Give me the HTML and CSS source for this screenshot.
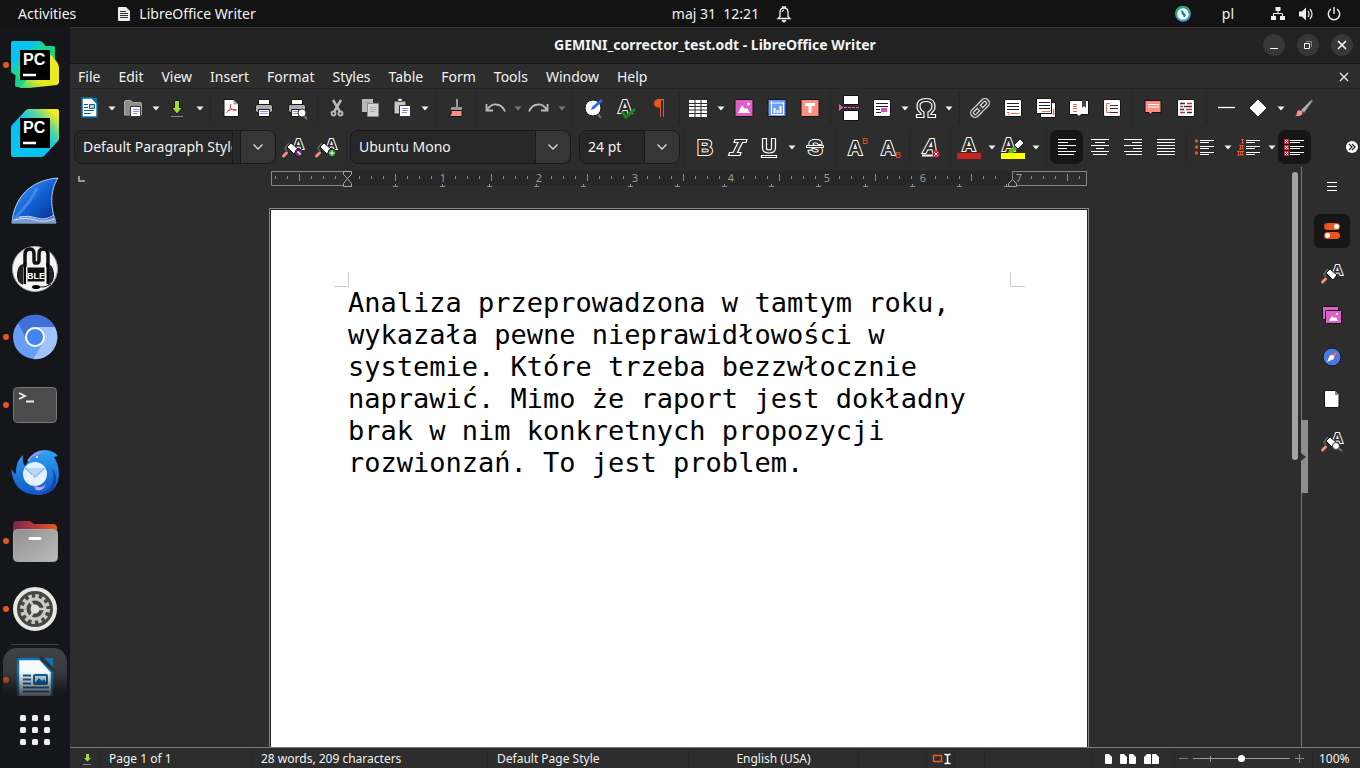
FILE: index.html
```html
<!DOCTYPE html>
<html lang="en">
<head>
<meta charset="utf-8">
<title>GEMINI_corrector_test.odt - LibreOffice Writer</title>
<link rel="stylesheet" href="styles.css">
</head>
<body>
<svg class="defs" aria-hidden="true">
  <defs>
    <linearGradient id="pc2" x1="0" y1="1" x2="1" y2="0"><stop offset=".5" stop-color="#07c3f2"/><stop offset=".72" stop-color="#5fd79a"/><stop offset=".9" stop-color="#f5ea20"/></linearGradient>
    <linearGradient id="pcg" x1="0" y1="0" x2="1" y2="1"><stop offset=".3" stop-color="#07c3f2"/><stop offset=".5" stop-color="#21d789"/></linearGradient>
    <linearGradient id="pcy" x1="0" y1="1" x2="1" y2="0"><stop offset="0" stop-color="#21d789"/><stop offset=".35" stop-color="#e6e820"/><stop offset="1" stop-color="#f5ea20"/></linearGradient>
    <linearGradient id="fin" x1="0" y1="0" x2="1" y2="1"><stop offset="0" stop-color="#4da3ff"/><stop offset=".5" stop-color="#1261d6"/><stop offset="1" stop-color="#06267c"/></linearGradient>
    <linearGradient id="fold" x1="0" y1="0" x2="1" y2="0"><stop offset="0" stop-color="#7a2554"/><stop offset="1" stop-color="#e95420"/></linearGradient>
    <linearGradient id="grey" x1="0" y1="0" x2="1" y2="1"><stop offset="0" stop-color="#8f8f8f"/><stop offset="1" stop-color="#bcbcbc"/></linearGradient>
    <linearGradient id="bird" x1="0" y1="0" x2="0" y2="1"><stop offset="0" stop-color="#2ea4f2"/><stop offset="1" stop-color="#1257c9"/></linearGradient>
    <symbol id="caret" viewBox="0 0 10 10"><path d="M1.500 3.500h7L5 7.500z" fill="currentColor"/></symbol>
    <symbol id="chevron" viewBox="0 0 12 12"><path d="M1.500 3.500 6 8l4.500-4.500" fill="none" stroke="#ddd" stroke-width="1.300"/></symbol>
    <symbol id="roller" viewBox="0 0 24 24">
      <text x="12" y="14" class="glyph" font-size="15">A</text>
      <path d="m2.500 21 3-3" stroke="#f98c7f" stroke-width="3" stroke-linecap="round"/>
      <path d="m6 17-2-4 4-5" stroke="#666" stroke-width="1.500" fill="none"/>
      <path d="m6 12 4-4 7 6-4 5z" fill="#fff" stroke="#181818"/>
    </symbol>
    <symbol id="sheet" viewBox="0 0 24 24"><rect x="3.500" y="3.500" width="17" height="17" rx="1.500" fill="#fff" stroke="#151515"/></symbol>
    <symbol id="printer" viewBox="0 0 24 24"><g stroke="#151515"><path d="M6.500 3.500h11v5h-11z" fill="#fff"/><rect x="3.500" y="8.500" width="17" height="8" rx="2" fill="#adadad"/><path d="M6.500 13.500h11v7h-11z" fill="#fff"/></g><path d="M8 15.500h8M8 17.500h8" stroke="#8b8bea"/></symbol>
  </defs>
</svg>

<header class="topbar">
  <div class="top-left">
    <button class="plain">Activities</button>
    <button class="plain app">
      <svg width="14" height="16" viewBox="0 0 14 16"><path d="M1 2q0-1 1-1h7l4 4v9q0 1-1 1H2q-1 0-1-1z" fill="#eee"/><path d="M3 5.500h6M3 7.500h8M3 9.500h8M3 11.500h8" stroke="#333"/></svg>
      LibreOffice Writer</button>
  </div>
  <button class="plain clock"><time>maj 31&nbsp; 12:21</time>
    <svg width="16" height="18" viewBox="0 0 16 18"><path d="M2 13.500h12l-2-2V7q0-4-4-4T4 7v4.500z" fill="none" stroke="#eee" stroke-width="1.300"/><path d="M6 7q0-2 2-2M6 15.500h4L8 17.500z" stroke="#eee" fill="#eee"/><path d="M6 2h4" stroke="#eee" stroke-width="1.500"/></svg>
  </button>
  <div class="top-right">
    <svg width="16" height="16" viewBox="0 0 16 16"><circle cx="8" cy="8" r="6.800" fill="#fff" stroke="#3aa0dc" stroke-width="2"/><path d="M1.300 9A6.800 6.800 0 1 1 14.700 7" fill="none" stroke="#1faa69" stroke-width="2"/><path d="m5 4 3 1 3 4-2 3-1-3-2-1 1-1z" fill="#1b8a94"/></svg>
    <span class="lang">pl</span>
    <button class="plain tray" aria-label="System menu">
      <svg width="16" height="16" viewBox="0 0 16 16"><path d="M5.500 1h5v4h-5zM1 10h5v4H1zM10 10h5v4h-5z" fill="#eee"/><path d="M8 5v3M3.500 10V7.500h9V10" stroke="#eee" fill="none"/></svg>
      <svg width="16" height="16" viewBox="0 0 16 16"><path d="M1 5.500h3l4-4v13l-4-4H1z" fill="#eee"/><path d="M10 5q2 3 0 6M12 3q4 5 0 10" fill="none" stroke="#ddd" stroke-width="1.300"/></svg>
      <svg width="16" height="16" viewBox="0 0 16 16"><path d="M5 3.200a5.700 5.700 0 1 0 6 0M8 1v7" fill="none" stroke="#eee" stroke-width="1.400"/></svg>
    </button>
  </div>
</header>

<div class="desktop">
  <nav class="dock" aria-label="Dock">
    <button class="dock-item running" aria-label="PyCharm">
      <svg viewBox="0 0 48 48"><path d="M6 5h36q2 0 2 2v20L18 46H6q-2 0-2-2z" fill="#16d583"/><path d="M40 14l6 7q2 3 2 6v14q0 2-2 3L18 47 8 47z" fill="url(#pcy)"/><path d="M0 2q0-2 2-2h27q2 0 4 3l6 9-14 20-16 5-8-5q-1 0-1-2z" fill="url(#pcg)"/><path d="M9 9h30v30H9z"/><text x="12" y="24" class="pc">PC</text><path d="M12 34h13" stroke="#fff" stroke-width="2.500"/></svg>
    </button>
    <button class="dock-item" aria-label="PyCharm Community">
      <svg viewBox="0 0 48 48"><path d="M0 19q0-2 1-3L15 1q1-1 3-1h28q2 0 2 2v27q0 2-1 3L33 47q-1 1-3 1H2q-2 0-2-2z" fill="url(#pc2)"/><path d="M9 9h30v30H9z"/><text x="12" y="24" class="pc">PC</text><path d="M12 34h13" stroke="#fff" stroke-width="2.500"/></svg>
    </button>
    <button class="dock-item" aria-label="Wireshark">
      <svg viewBox="0 0 48 48"><path d="M1 46C3 20 20 3 47 1 38 15 40 32 45 46z" fill="url(#fin)" stroke="#b5cff0"/><path d="M4 41q16-16 22-30" stroke="#8cc4ff" stroke-opacity=".35" stroke-width="3" fill="none"/><path d="M2 42q11-5 21-1t21-2l1 7H1z" fill="#7799d8"/><path d="M3 43q12-3 21 0t20-1M8 40q10-2 18 1t17-3" stroke="#cbdcf8" fill="none"/></svg>
    </button>
    <button class="dock-item" aria-label="Mumble">
      <svg viewBox="0 0 48 48"><circle cx="24" cy="24" r="22.500" fill="#f4f4f4" stroke="#aaa"/><path d="M14 22V10q0-6 5-6 4 0 4 5v6q0 3 1 3h2q2 0 2-3V9q0-5 4-5 5 0 5 6v12" fill="none" stroke="#111" stroke-width="3.500"/><path d="M12 19v21Q5 37 6 28q1-8 6-9zM37 19v21q7-3 6-12-1-8-6-9z" fill="#222"/><path d="M12.500 18h2.500v21h-2.500zM35.500 18H38v21h-2.500z"/><path d="M16.500 22.500h17v14h-17z" fill="#111"/><text x="16" y="34" class="ble">BLE</text><path d="M40 39q-6 4-12 3" stroke="#111" fill="none"/><ellipse cx="25" cy="42" rx="4" ry="2"/></svg>
    </button>
    <button class="dock-item running" aria-label="Chromium">
      <svg viewBox="0 0 48 48"><circle cx="24" cy="24" r="22" fill="#669df6"/><path d="M24 14h20A22 22 0 0 1 22 46l11-18z" fill="#a1c2fa"/><path d="M7 10a22 22 0 0 1 37 4H24q-8 0-10 9z" fill="#3f6fd8"/><circle cx="24" cy="24" r="9" fill="#4285f4" stroke="#fff" stroke-width="2"/></svg>
    </button>
    <button class="dock-item running" aria-label="Terminal">
      <svg viewBox="0 0 48 48"><rect x="2.500" y="6.500" width="43" height="35" rx="4" fill="#4b4b4b" stroke="#777"/><path d="m8 12 6 3-6 3M15 20.500h8" fill="none" stroke="#eee" stroke-width="1.800"/></svg>
    </button>
    <button class="dock-item" aria-label="Thunderbird">
      <svg viewBox="0 0 48 48"><path d="M0 19q2 5 5 6Q4 13 12 6q-1 8 2 11l4-6Q23 0 35 1q8 1 12 6l-4 1q5 8 5 18-2 20-22 20Q2 45 0 19z" fill="url(#bird)"/><path d="M16 12Q22 1 34 2l-7 4q-7 1-8 6z" fill="#9d8cf0"/><path d="M27 46q20-7 14-27 9 13-1 23-6 4-13 4z" fill="#1247b0"/><circle cx="24" cy="25" r="12" fill="#e3f1ff"/><path d="m14 19 10 9 10-9" fill="#b9d9f8" stroke="#8dbdf0" stroke-width="1.500"/><path d="m14 31 8-5M34 31l-7-5" stroke="#fff"/><path d="M23 37q8 3 12-2-3 8-10 6z" fill="#bba7f5"/><circle cx="26" cy="8" r="1" fill="#fff"/></svg>
    </button>
    <button class="dock-item running" aria-label="Files">
      <svg viewBox="0 0 48 48"><path d="M2 8q0-4 4-4h13l4 3h19q4 0 4 4v12H2z" fill="url(#fold)"/><rect x="2.500" y="12.500" width="44" height="32" rx="4" fill="url(#grey)" stroke="#aaa"/><path d="M19 21.500h10" stroke="#fff" stroke-width="3" stroke-linecap="round"/></svg>
    </button>
    <button class="dock-item running" aria-label="Settings">
      <svg viewBox="0 0 48 48"><circle cx="24" cy="24" r="20" fill="#454545" stroke="#e6e6e2" stroke-width="4"/><circle cx="24" cy="24" r="13" fill="none" stroke="#c9c9c5" stroke-width="4" stroke-dasharray="3.400 3.400"/><circle cx="24" cy="24" r="10" fill="none" stroke="#c9c9c5" stroke-width="3"/><path d="M24 24h11M24 24l-6-10M24 24l-6 10" stroke="#c9c9c5" stroke-width="2.500"/><circle cx="24" cy="24" r="4.500" fill="#e2e2de"/></svg>
    </button>
    <hr>
    <button class="dock-item running active" aria-label="LibreOffice Writer">
      <svg viewBox="0 0 48 48"><path d="M9 11h20l12 13v34H7V13q0-2 2-2z" fill="#f6fafc" stroke="#0f73b2" stroke-width="2.500"/><path d="M33 10h9v9z" fill="#0f73b2"/><path d="M29 9l14 14" stroke="#2e3033" stroke-width="3"/><path d="M12 27.500h8M12 31.500h8M12 35.500h8M12 39.500h26M12 43.500h26" stroke="#0f6098" stroke-width="2"/><rect x="23" y="27" width="13" height="9" rx="1" fill="#c7e4f5" stroke="#0f6098" stroke-width="2"/><path d="m23 36 5-6 3 3 2-2 3 5z" fill="#0f6098"/></svg>
    </button>
    <button class="launcher" aria-label="Show Applications">
      <svg width="32" height="32" viewBox="0 0 32 32" fill="#eeeeec"><g id="dots"><rect x="1" y="1" width="6" height="6" rx="1.500"/><rect x="13" y="1" width="6" height="6" rx="1.500"/><rect x="25" y="1" width="6" height="6" rx="1.500"/></g><use href="#dots" y="12"/><use href="#dots" y="24"/></svg>
    </button>
  </nav>

  <main class="window">
    <div class="titlebar">
      <h1>GEMINI_corrector_test.odt - LibreOffice Writer</h1>
      <div class="controls">
        <button aria-label="Minimize"><svg viewBox="0 0 12 12"><path d="M2 9.500h8" stroke="#fff"/></svg></button>
        <button aria-label="Restore"><svg viewBox="0 0 12 12"><path d="M2.500 4.500h5v5h-5z" fill="none" stroke="#fff"/><path d="M4 2.500h5.500V8" fill="none" stroke="#888"/></svg></button>
        <button aria-label="Close"><svg viewBox="0 0 12 12"><path d="m2 2 8 8M10 2l-8 8" stroke="#fff" stroke-width="1.500"/></svg></button>
      </div>
    </div>

    <nav class="menubar" aria-label="Menu">
      <button>File</button><button>Edit</button><button>View</button><button>Insert</button><button>Format</button><button>Styles</button><button>Table</button><button>Form</button><button>Tools</button><button>Window</button><button>Help</button>
      <button class="close-doc" aria-label="Close document"><svg width="12" height="12" viewBox="0 0 12 12"><path d="m2 2 8 8M10 2l-8 8" stroke="#eee" stroke-width="1.300"/></svg></button>
    </nav>

    <div class="toolbar" role="toolbar" aria-label="Standard">
      <button class="drop" aria-label="New"><svg viewBox="0 0 24 24"><path d="M5 2h10l5 5v14H5z" fill="#fff" stroke="#0b6fae" stroke-width="1.500"/><path d="M14 2h6v6z" fill="#0b6fae"/><path d="M7 8.500h4M7 11.500h4M7 14.500h10M7 17.500h7" stroke="#0b5a90"/><path d="M12.500 8.500h5v4h-5z" fill="#a5d3ec" stroke="#0b5a90"/></svg><svg class="caret"><use href="#caret"/></svg></button>
      <button class="drop" aria-label="Open"><svg viewBox="0 0 24 24"><path d="M3.500 6q0-1.500 1.500-1.500h5l2 2h7q1.500 0 1.500 1.500v11h-17z" fill="#8e8e8e" stroke="#a8a8a8"/><path d="M9.500 10.500h10v10h-10z" fill="#fff" stroke="#333"/><path d="M12 13.500h6M12 15.500h6M12 17.500h4" stroke="#8b8bea"/></svg><svg class="caret"><use href="#caret"/></svg></button>
      <button class="drop" aria-label="Save"><svg viewBox="0 0 24 24"><path d="M9.500 4.500h5v7h3L12 18 6.500 11.500h3z" fill="#9fdc3c" stroke="#151515"/><path d="M6 20.500h12" stroke="#888"/></svg><svg class="caret"><use href="#caret"/></svg></button>
      <span class="sep"></span>
      <button aria-label="Export as PDF"><svg viewBox="0 0 24 24"><path d="M5 3.500h9.500l5 5v12H5z" fill="#fff" stroke="#151515"/><path d="M14.500 3.500v5h5" fill="#aaa"/><path d="M11.500 8v4l-4 5m4-5q3 4 6 2-4-2-9 1" fill="none" stroke="#e2475c"/></svg></button>
      <button aria-label="Print"><svg viewBox="0 0 24 24"><use href="#printer"/></svg></button>
      <button aria-label="Print preview"><svg viewBox="0 0 24 24"><use href="#printer"/><path d="m17 18 5 5" stroke="#777" stroke-width="2"/><circle cx="17" cy="17" r="4" fill="#fff" stroke="#333"/></svg></button>
      <span class="sep"></span>
      <button aria-label="Cut"><svg viewBox="0 0 24 24"><path d="m7 4 7 12M15 4 8 16" stroke="#b9b9b9" stroke-width="2.500"/><circle cx="7.500" cy="17.500" r="2" fill="none" stroke="#b9b9b9" stroke-width="1.800"/><circle cx="14.500" cy="17.500" r="2" fill="none" stroke="#b9b9b9" stroke-width="1.800"/></svg></button>
      <button aria-label="Copy"><svg viewBox="0 0 24 24"><path d="M3 3h11v13H3z" fill="#b9b9b9"/><path d="M8.500 7.500h11v13h-11z" fill="#d4d4d4" stroke="#888"/><path d="M11 11.500h6M11 13.500h6M11 15.500h5M5 6.500h6" stroke="#aaa"/></svg></button>
      <button class="drop" aria-label="Paste"><svg viewBox="0 0 24 24"><path d="M4 5h12v13H4z" fill="#c8c8c8" stroke="#222"/><path d="M8 2.500h4v3H8z" fill="#fff" stroke="#444"/><path d="M9.500 9.500h11v11h-11z" fill="#fff" stroke="#333"/><path d="M12 12.500h6M12 14.500h6M12 16.500h5" stroke="#8b8bea"/></svg><svg class="caret"><use href="#caret"/></svg></button>
      <span class="sep"></span>
      <button aria-label="Clone formatting"><svg viewBox="0 0 24 24"><path d="M13 3v9" stroke="#999" stroke-width="2"/><path d="M7 12q0-1 1-1h10v3H7z" fill="#999"/><path d="M7 14.500h11v6H5q3-2 2-6z" fill="#fa8f82" stroke="#181818"/></svg></button>
      <span class="sep"></span>
      <button class="drop muted" aria-label="Undo"><svg viewBox="0 0 24 24"><path d="M3.500 8v6.500H10M4 14Q8 8 13 8.500q6 0 9 7" fill="none" stroke="#bbb" stroke-width="1.800"/></svg><svg class="caret"><use href="#caret"/></svg></button>
      <button class="drop muted" aria-label="Redo"><svg viewBox="0 0 24 24"><path d="M20.500 8v6.500H14M20 14q-4-6-9-5.500-6 0-9 7" fill="none" stroke="#bbb" stroke-width="1.800"/></svg><svg class="caret"><use href="#caret"/></svg></button>
      <span class="sep"></span>
      <button aria-label="Find and replace"><svg viewBox="0 0 24 24"><path d="m16 17 4 5" stroke="#777" stroke-width="2"/><circle cx="12" cy="12" r="8" fill="#fff" stroke="#181818"/><path d="m10 14 1-3 9-8 2 2-9 8z" fill="#2f6ae0"/></svg></button>
      <button aria-label="Spelling"><svg viewBox="0 0 24 24"><text x="4" y="17" class="glyph" font-size="19">A</text><path d="m8 16 4 5 9-8" fill="none" stroke="#128a22" stroke-width="3"/></svg></button>
      <button aria-label="Formatting marks"><svg viewBox="0 0 24 24"><path d="M11 3h6v18h-1V4.500h-2V21h-1v-9.500h-2Q7 11 7 7.500T11 3z" fill="#e95420"/></svg></button>
      <span class="sep"></span>
      <button class="drop" aria-label="Insert table"><svg viewBox="0 0 24 24"><path d="M3 4h18v17H3z" fill="#fff"/><path d="M3 7.500h18M3 10.500h18M3 14h18M3 17.500h18M9 4v17M15 4v17" stroke="#2d2d2d"/></svg><svg class="caret"><use href="#caret"/></svg></button>
      <button aria-label="Insert image"><svg viewBox="0 0 24 24"><rect x="3" y="3.500" width="18" height="17" rx="1" fill="#e05fc9" stroke="#151515"/><path d="m6 17 4-8 3 4 2-1 3 5z" fill="#fff"/><circle cx="16.500" cy="8" r="1.500" fill="#fff"/></svg></button>
      <button aria-label="Insert chart"><svg viewBox="0 0 24 24"><rect x="3" y="3.500" width="18" height="17" rx="1" fill="#6f9cf8" stroke="#151515"/><path d="M6.500 5v13.500H19M5 7h14M18.500 7v11.500" fill="none" stroke="#fff"/><path d="M9.500 17v-5M12.500 17v-3M15.500 17v-7" stroke="#fff" stroke-width="2"/></svg></button>
      <button aria-label="Insert text box"><svg viewBox="0 0 24 24"><rect x="3" y="3.500" width="18" height="17" rx="1" fill="#fa8f82" stroke="#151515"/><path d="M7 8.500h10M12 8v9" stroke="#fff" stroke-width="3"/></svg></button>
      <span class="sep"></span>
      <button aria-label="Page break"><svg viewBox="0 0 24 24"><path d="M4.500-.5h15v9h-15zM4.500 14.500h15v10h-15z" fill="#fff" stroke="#111"/><path d="M0 8v7l4-3.500z" fill="#e05fc9"/><path d="M5 11.500h15" stroke="#e05fc9" stroke-dasharray="3 1"/></svg></button>
      <button class="drop" aria-label="Insert field"><svg viewBox="0 0 24 24"><use href="#sheet"/><path d="M6 7.500h12M6 10.500h12M6 13.500h4M6 16.500h5" stroke="#222"/><path d="M11 12h6v4h-6z" fill="#d44fc0"/></svg><svg class="caret"><use href="#caret"/></svg></button>
      <button class="drop" aria-label="Special character"><svg viewBox="0 0 24 24"><path d="M2.500 18.500H7v-1Q3 14.500 3 10.500 3 2.500 12 2.500t9 8q0 4-4 7v1h4.500v3H14V16q4-2 4-6 0-4.500-6-4.500T6 10q0 4 4 6v5.500H2.500z" fill="#2d2d2d" stroke="#fff" stroke-width="1.200"/></svg><svg class="caret"><use href="#caret"/></svg></button>
      <span class="sep"></span>
      <button aria-label="Hyperlink"><svg viewBox="0 0 24 24"><g fill="none" transform="rotate(-45 12 12)"><g stroke="#ddd" stroke-width="4"><rect x="2" y="9" width="11" height="6" rx="3"/><rect x="11" y="9" width="11" height="6" rx="3"/></g><g stroke="#333" stroke-width="1.500"><rect x="2" y="9" width="11" height="6" rx="3"/><rect x="11" y="9" width="11" height="6" rx="3"/></g></g></svg></button>
      <button aria-label="Footnote"><svg viewBox="0 0 24 24"><use href="#sheet"/><path d="M6 7.500h12M6 10.500h12M6 13.500h12" stroke="#222"/><path d="M6 16.500h2v3M10 17.500h8" fill="none" stroke="#f07060"/></svg></button>
      <button aria-label="Endnote"><svg viewBox="0 0 24 24"><path d="M6.500 6.500h15v15h-15z" fill="#fff" stroke="#151515"/><path d="M19.500 13v6" stroke="#f07060" stroke-width="1.500"/><path d="M2.500 2.500h15v15h-15z" fill="#fff" stroke="#151515"/><path d="M5 6.500h11M5 9.500h11M5 12.500h11" stroke="#222"/><path d="M8 15.500h8" stroke="#f07060"/></svg></button>
      <button aria-label="Bookmark"><svg viewBox="0 0 24 24"><path d="M2.500 4.500h19v14H14l-2 2-2-2H2.500z" fill="#fff" stroke="#151515"/><path d="M15 4h4v8l-2-2-2 2z" fill="#444"/><path d="M6 8.500h4M6 10.500h4M6 12.500h4M6 15.500h4" stroke="#f07060"/></svg></button>
      <button aria-label="Cross-reference"><svg viewBox="0 0 24 24"><use href="#sheet"/><path d="M10 7.500H6.500v9H10" fill="none" stroke="#f07060"/><path d="M10 9.500h8M10 12.500h8M10 16.500h8" stroke="#333"/></svg></button>
      <span class="sep"></span>
      <button aria-label="Comment"><svg viewBox="0 0 24 24"><path d="M4 4.500h16v12H11l-2 3-1-3H4z" fill="#fa8f82" stroke="#151515"/><path d="M7 8.500h11M7 11h11" stroke="#fff"/></svg></button>
      <button aria-label="Track changes"><svg viewBox="0 0 24 24"><use href="#sheet"/><path d="M6 7.500h5M10 10.500h8M6 13.500h4M13 16.500h5" stroke="#333" stroke-width="1.300"/><path d="M13 7.500h5M6 10.500h3M12 13.500h6M6 16.500h5" stroke="#cc2940" stroke-width="1.300"/></svg></button>
      <span class="sep"></span>
      <button aria-label="Line"><svg viewBox="0 0 24 24"><path d="M3 11.500h17" stroke="#fff" stroke-width="1.300"/></svg></button>
      <button class="drop" aria-label="Basic shapes"><svg viewBox="0 0 24 24"><path d="m12 4 8 8-8 8-8-8z" fill="#fff" stroke="#fff"/></svg><svg class="caret"><use href="#caret"/></svg></button>
      <button aria-label="Draw functions"><svg viewBox="0 0 24 24"><path d="M9 14 19 4q2-1 1 2l-8 11z" fill="#aaa" stroke="#555"/><path d="M3 20q2-1 2-4t5-1q2 4-3 5z" fill="#fa8f82"/></svg></button>
    </div>

    <div class="toolbar format" role="toolbar" aria-label="Formatting">
      <div class="combo style"><input aria-label="Paragraph style" value="Default Paragraph Style"><span class="edge"></span><button aria-label="Show styles"><svg width="12" height="12"><use href="#chevron"/></svg></button></div>
      <button aria-label="Update style"><svg viewBox="0 0 24 24"><use href="#roller"/><circle cx="18" cy="18" r="4" fill="#76237c" stroke="#222"/><path d="m16.500 16.500 3 3" stroke="#fff" stroke-width="1.500"/></svg></button>
      <button aria-label="New style"><svg viewBox="0 0 24 24"><use href="#roller"/><circle cx="18" cy="18" r="4" fill="#2b962b" stroke="#222"/><path d="M15.500 18h5M18 15.500v5" stroke="#fff"/></svg></button>
      <span class="sep"></span>
      <div class="combo font"><input aria-label="Font name" value="Ubuntu Mono"><button aria-label="Show fonts"><svg width="12" height="12"><use href="#chevron"/></svg></button></div>
      <div class="combo size"><input aria-label="Font size" value="24 pt"><button aria-label="Show sizes"><svg width="12" height="12"><use href="#chevron"/></svg></button></div>
      <span class="sep"></span>
      <button aria-label="Bold"><svg viewBox="0 0 24 24"><text x="4" y="20" class="glyph" font-size="22">B</text></svg></button>
      <button aria-label="Italic"><svg viewBox="0 0 24 24"><path d="M9 4.500h12l-1 3h-3.500l-5 10H15l-1 3H2.500l1-3H7l5-10H8z" fill="#333" stroke="#fff" stroke-width="1.200"/></svg></button>
      <button class="drop" aria-label="Underline"><svg viewBox="0 0 24 24"><path d="M5.500 3.500h4V13q0 2 2.500 2t2.500-2V3.500h4V13q0 5-6.500 5t-6.500-5zM4.500 20.500h15v2h-15z" fill="#333" stroke="#fff" stroke-width="1.200"/></svg><svg class="caret"><use href="#caret"/></svg></button>
      <button aria-label="Strikethrough"><svg viewBox="0 0 24 24"><text x="5" y="20" class="glyph" font-size="22">S</text><path d="M3.500 10.500h17v2h-17z" fill="#333" stroke="#fff"/></svg></button>
      <span class="sep"></span>
      <button aria-label="Superscript"><svg viewBox="0 0 24 24"><text x="4" y="20" class="glyph" font-size="20">A</text><text x="18" y="9" class="script">B</text></svg></button>
      <button aria-label="Subscript"><svg viewBox="0 0 24 24"><text x="4" y="20" class="glyph" font-size="20">A</text><text x="18" y="23" class="script">B</text></svg></button>
      <span class="sep"></span>
      <button aria-label="Clear formatting"><svg viewBox="0 0 24 24"><text x="5" y="18" class="glyph slant" font-size="20">A</text><path d="M4 20.500h12" stroke="#fff" stroke-width="2"/><circle cx="18" cy="19" r="3.500" fill="#cf2942"/><path d="m16.500 17.500 3 3m0-3-3 3" stroke="#fff"/></svg></button>
      <span class="sep"></span>
      <button class="drop" aria-label="Font color"><svg viewBox="0 0 24 24"><text x="5" y="16" class="glyph" font-size="19">A</text><path d="M0 18h24v6H0z" fill="#c9211e"/></svg><svg class="caret"><use href="#caret"/></svg></button>
      <button class="drop" aria-label="Highlighting color"><svg viewBox="0 0 24 24"><text x="1" y="16" class="glyph" font-size="18">A</text><path d="m13 10 6-6 4 4-6 6z" fill="#fff" stroke="#222"/><path d="m7 18 1-3 5-4 3 3-4 4z" fill="#62b52d"/><path d="M0 18h24v6H0z" fill="#ff0"/></svg><svg class="caret"><use href="#caret"/></svg></button>
      <span class="sep"></span>
      <button class="pressed" aria-label="Align left"><svg viewBox="0 0 24 24"><path d="M3 4.500h18M3 7.500h10M3 10.500h18M3 13.500h9M3 16.500h18M3 19.500h16" stroke="#fff"/></svg></button>
      <button aria-label="Center"><svg viewBox="0 0 24 24"><path d="M3 4.500h18M7 7.500h10M3 10.500h18M8 13.500h8M3 16.500h18M5 19.500h14" stroke="#fff"/></svg></button>
      <button aria-label="Align right"><svg viewBox="0 0 24 24"><path d="M3 4.500h18M11 7.500h10M3 10.500h18M12 13.500h9M3 16.500h18M5 19.500h16" stroke="#fff"/></svg></button>
      <button aria-label="Justify"><svg viewBox="0 0 24 24"><path d="M3 4.500h18M3 7.500h18M3 10.500h18M3 13.500h18M3 16.500h18M3 19.500h18" stroke="#fff"/></svg></button>
      <span class="sep"></span>
      <button class="drop" aria-label="Bullets"><svg viewBox="0 0 24 24"><path d="M7 5.500h14M7 7.500h9M7 11.500h14M7 13.500h9M7 17.500h14M7 19.500h9" stroke="#fff"/><g fill="#e95420"><circle cx="3.500" cy="6" r="1.700"/><circle cx="3.500" cy="12" r="1.700"/><circle cx="3.500" cy="18" r="1.700"/></g></svg><svg class="caret"><use href="#caret"/></svg></button>
      <button class="drop" aria-label="Numbering"><svg viewBox="0 0 24 24"><path d="M9 5.500h14M9 7.500h9M9 11.500h14M9 13.500h9M9 17.500h14M9 19.500h9" stroke="#fff"/><path d="M4 4.500h3M5.500 4v4M4 8h3M2 10.500h5M3.500 10v4M5.500 10v4M2 14h5M0 16.500h7M1.500 16v4M3.500 16v4M5.500 16v4M0 20h7" stroke="#e95420"/></svg><svg class="caret"><use href="#caret"/></svg></button>
      <button class="pressed" aria-label="No list"><svg viewBox="0 0 24 24"><path d="M7 5.500h14M7 7.500h10M7 11.500h14M7 13.500h10M7 17.500h14M7 19.500h10" stroke="#fff"/><path d="M1 4h5v5H1zM1 10h5v5H1zM1 16h5v5H1z" fill="#cc2942"/><path d="m2 5 3 3m0-3L2 8m0 3 3 3m0-3-3 3m0 3 3 3m0-3-3 3" stroke="#fff"/></svg></button>
      <button class="overflow" aria-label="More controls"><svg width="12" height="12" viewBox="0 0 12 12"><circle cx="6" cy="6" r="6" fill="#fff"/><path d="m3 3 3 3-3 3m3-6 3 3-3 3" fill="none" stroke="#222" stroke-width="1.200"/></svg></button>
    </div>

    <div class="workspace">
      <section class="canvas">
        <div class="ruler-row">
          <svg class="tab-type" width="7" height="6" viewBox="0 0 7 6"><path d="M1 0v5h6" fill="none" stroke="#999" stroke-width="2"/></svg>
          <svg class="ruler" height="20" viewBox="0 0 816 20" aria-label="Ruler">
            <defs>
              <pattern id="ticks" x="4" width="48" height="20" patternUnits="userSpaceOnUse"><path d="M.5 5v3M12.500 5v3M36.500 5v3" stroke="#8a8a8a"/><path d="M24.500 3v7" stroke="#8a8a8a"/></pattern>
              <pattern id="stops" x="-1" width="47" height="20" patternUnits="userSpaceOnUse"><path d="M29 15.500h5M31.500 13v3" stroke="#8a8a8a"/></pattern>
            </defs>
            <path d="M77 0h664v14H77z" fill="#272727"/>
            <path d="M.5.500h76v14H.5zM741.500.500h74v14h-74z" fill="none" stroke="#888"/>
            <rect x="2" width="70" height="14" fill="url(#ticks)"/><rect x="82" width="654" height="14" fill="url(#ticks)"/><rect x="752" width="61" height="14" fill="url(#ticks)"/>
            <rect x="112" y="12" width="625" height="5" fill="url(#stops)"/>
            <g fill="#272727"><path d="M168 2h9v10h-9zM264 2h9v10h-9zM360 2h9v10h-9zM456 2h9v10h-9zM552 2h9v10h-9zM648 2h9v10h-9z"/></g>
            <g class="numbers"><text x="172" y="11">1</text><text x="268" y="11">2</text><text x="364" y="11">3</text><text x="460" y="11">4</text><text x="556" y="11">5</text><text x="652" y="11">6</text><text x="748" y="11">7</text></g>
            <path d="M72.500.5h8v3l-4 4-4-4zM76.500 7.500l4 5v3h-8v-3zM741.500 8.500l4 4v3h-8v-3z" fill="#2d2d2d" stroke="#aaa"/>
          </svg>
        </div>
        <article class="page">
          <p>Analiza przeprowadzona w tamtym roku, wykazała pewne nieprawidłowości w systemie. Które trzeba bezzwłocznie naprawić. Mimo że raport jest dokładny brak w nim konkretnych propozycji rozwionzań. To jest problem.</p>
        </article>
      </section>
      <div class="scroll"><div class="thumb"></div></div>
      <aside class="sidebar" aria-label="Sidebar">
        <button class="handle" aria-label="Hide sidebar"><svg width="5" height="8" viewBox="0 0 5 8"><path d="m0 0 5 4-5 4z" fill="#333"/></svg></button>
        <button aria-label="Sidebar settings"><svg viewBox="0 0 24 24"><path d="M7 8.500h10M7 12.500h10M7 16.500h10" stroke="#fff"/></svg></button>
        <button class="pressed" aria-label="Properties"><svg viewBox="0 0 24 24"><rect x="4" y="4" width="16" height="7" rx="3.500" fill="#e95420"/><rect x="4" y="13" width="16" height="7" rx="3.500" fill="#e95420"/><circle cx="16.500" cy="7.500" r="2.500" fill="#fff"/><circle cx="7.500" cy="16.500" r="2.500" fill="#fff"/></svg></button>
        <button aria-label="Styles"><svg viewBox="0 0 24 24"><use href="#roller"/></svg></button>
        <button aria-label="Gallery"><svg viewBox="0 0 24 24"><rect x="2.500" y="3.500" width="16" height="13" rx="1" fill="#df5fc9" stroke="#151515"/><rect x="5.500" y="7.500" width="16" height="13" rx="1" fill="#df5fc9" stroke="#151515"/><path d="m9 18 3-5 2 2 2-1 2 4z" fill="#fff"/><circle cx="17" cy="11" r="1" fill="#fff"/></svg></button>
        <button aria-label="Navigator"><svg viewBox="0 0 24 24"><circle cx="12" cy="12" r="9" fill="#4a78e0" stroke="#151515"/><path d="m7 17 3-7 4 4z" fill="#fff"/><path d="m10 10 7-3-3 7z" fill="#e7707d"/><circle cx="12" cy="12" r="2" fill="#fff"/></svg></button>
        <button aria-label="Page"><svg viewBox="0 0 24 24"><path d="M4.500 5q0-1.500 1.500-1.500h9l4 4V19q0 1.500-1.500 1.500H6q-1.500 0-1.500-1.500z" fill="#fff" stroke="#151515"/><path d="M15 4v4h4z" fill="#888"/></svg></button>
        <button aria-label="Style inspector"><svg viewBox="0 0 24 24"><use href="#roller"/><path d="m18 19 4 3" stroke="#777" stroke-width="2"/><circle cx="16" cy="17" r="3.500" fill="#fff" stroke="#333"/></svg></button>
      </aside>
    </div>

    <footer class="statusbar">
      <span class="st save"><svg width="10" height="12" viewBox="0 0 10 12"><path d="M4 1h3v4h2L5.500 8.500 2 5h2z" fill="#9fdc3c"/><path d="M1 11.500h8" stroke="#888"/></svg></span>
      <span class="st pages">Page 1 of 1</span>
      <span class="st words">28 words, 209 characters</span>
      <span class="st pstyle">Default Page Style</span>
      <span class="st language">English (USA)</span>
      <span class="st spacer"></span>
      <span class="st mode"><svg width="20" height="12" viewBox="0 0 20 12"><path d="M1.500 2.500h8v6h-8z" fill="none" stroke="#f05a22" stroke-width="1.500"/><path d="M12.500 1.500h2l1 1 1-1h2M15.500 2v8M12.500 10.500h2l1-1 1 1h2" fill="none" stroke="#fff" stroke-width="1.500"/></svg></span>
      <span class="st blank"></span>
      <span class="st object"></span>
      <span class="st views">
        <button aria-label="Single page"><svg width="9" height="12" viewBox="0 0 9 12"><path d="M1 2q0-1 1-1h3l3 3v6q0 1-1 1H2q-1 0-1-1z" fill="#fff"/></svg></button>
        <button aria-label="Multiple pages"><svg width="18" height="12" viewBox="0 0 18 12"><path d="M1 2q0-1 1-1h3l3 3v6q0 1-1 1H2q-1 0-1-1zM10 2q0-1 1-1h3l3 3v6q0 1-1 1h-5q-1 0-1-1z" fill="#fff"/></svg></button>
        <button aria-label="Book view"><svg width="17" height="12" viewBox="0 0 17 12"><path d="M1 4l3-3h3q1 0 1 1v9H2q-1 0-1-1zM9 2q0-1 1-1h3l3 3v6q0 1-1 1H9z" fill="#fff"/></svg></button>
      </span>
      <span class="st zoom">
        <button aria-label="Zoom out"><svg width="9" height="9" viewBox="0 0 9 9"><path d="M0 4.500h9" stroke="#888"/></svg></button>
        <input type="range" aria-label="Zoom" min="0" max="100" value="50">
        <button aria-label="Zoom in"><svg width="9" height="9" viewBox="0 0 9 9"><path d="M0 4.500h9M4.500 0v9" stroke="#888"/></svg></button>
      </span>
      <span class="percent">100%</span>
    </footer>
  </main>
</div>
</body>
</html>
```
FILE: styles.css
```css
* { box-sizing: border-box; }
html, body { height: 100%; }
body {
  margin: 0;
  display: flex;
  flex-direction: column;
  overflow: hidden;
  background: #2d2d2d;
  color: #f2f2f2;
  font: 14px/20px "Noto Sans", "Open Sans", sans-serif;
}
button, input { font: inherit; color: inherit; }
button { border: 0; background: none; padding: 0; }
svg { display: block; flex: none; }
.defs { position: absolute; width: 0; height: 0; }

.glyph { font-family: "Liberation Sans", sans-serif; font-weight: bold; fill: #2d2d2d; stroke: #fff; stroke-width: 2px; paint-order: stroke; }
.slant { font-style: italic; }
.script { font: 9px "Liberation Sans", sans-serif; fill: #e95420; }
.pc { font: bold 16px "Liberation Sans", sans-serif; fill: #fff; }
.ble { font: bold 9px "Liberation Sans", sans-serif; fill: #fff; }

.topbar {
  flex: none;
  height: 27px;
  display: grid;
  grid-template-columns: 1fr auto 1fr;
  align-items: center;
  background: #131313;
}
.plain { display: flex; align-items: center; }
.top-left { display: flex; padding-left: 18px; gap: 41px; }
.app { gap: 8px; }
.clock { gap: 17px; padding-left: 104px; }
.top-right { display: flex; justify-content: flex-end; align-items: center; padding-right: 18px; }
.lang { margin: 0 36px 0 31px; }
.tray { gap: 12px; }

.desktop { flex: 1; min-height: 0; display: flex; }
.dock {
  width: 70px;
  flex: none;
  display: flex;
  flex-direction: column;
  align-items: center;
  padding-top: 4px;
  background: #14161a;
}
.dock-item {
  position: relative;
  flex: none;
  width: 64px;
  height: 68px;
  display: grid;
  place-items: center;
}
.dock-item svg { width: 48px; height: 48px; }
.running::before {
  content: "";
  position: absolute;
  left: 0;
  top: 31px;
  width: 6px;
  height: 6px;
  border-radius: 50%;
  background: #e95420;
}
.dock hr { width: 48px; margin: 1px 0 3px; border: 0; border-top: 1px solid #444; flex: none; }
.dock-item.active {
  height: 48px;
  overflow: hidden;
  place-items: start center;
  border-radius: 14px 14px 0 0;
  background: linear-gradient(#404246, #36383c 60%, #1b1d21);
}
.dock-item.active::before { top: 29px; }
.active::after { content: ""; position: absolute; inset: 24px 0 0; background: linear-gradient(transparent, #14161acc); }
.launcher { margin-top: 18px; }

.window { flex: 1; min-width: 0; display: flex; flex-direction: column; }
.titlebar {
  position: relative;
  flex: none;
  height: 37px;
  display: flex;
  align-items: center;
  justify-content: center;
  padding-bottom: 2px;
  background: #222;
  border-top: 1px solid #383838;
  border-bottom: 1px solid #161616;
}
.titlebar h1 { margin: 0; font-size: 14px; line-height: 20px; font-weight: bold; }
.controls { position: absolute; right: 7px; display: flex; gap: 12px; }
.controls button { width: 22px; height: 22px; border-radius: 50%; background: #373737; display: grid; place-items: center; }
.controls svg { width: 12px; height: 12px; }
.menubar { flex: none; height: 25px; display: flex; align-items: center; gap: 18px; padding: 2px 10px 0 8px; border-bottom: 1px solid #262626; }
.close-doc { margin-left: auto; }

.toolbar { flex: none; height: 38px; display: flex; align-items: center; padding-left: 4px; }
.toolbar > button { flex: none; width: 33px; height: 34px; padding-left: 5px; display: flex; align-items: center; border-radius: 7px; }
.toolbar > button > svg { width: 24px; height: 24px; overflow: visible; }
.toolbar > .drop { width: 44px; padding-left: 3px; gap: 6px; }
.toolbar > .drop > .caret { width: 10px; height: 10px; }
.muted { color: #777; }
.sep { flex: none; width: 8px; height: 32px; background: linear-gradient(#262626, #262626) center / 1px 100% no-repeat; }
.pressed { background: #161616; }
.format { height: 40px; }
.toolbar > .overflow { width: 12px; padding: 0; margin-left: auto; margin-right: 2px; }
.toolbar > .overflow > svg { width: 12px; height: 12px; }
.combo { display: flex; height: 34px; border: 1px solid #191919; border-radius: 8px; background: #272727; overflow: hidden; }
.combo input { flex: 1; min-width: 0; border: 0; padding: 0 0 0 8px; background: transparent; outline: 0; }
.combo button { flex: none; width: 35px; display: grid; place-items: center; background: #363636; border-left: 1px solid #191919; }
.edge { width: 8px; border-left: 1px solid #191919; }
.style { width: 202px; }
.font { width: 221px; }
.size { width: 101px; margin-left: 8px; }

.workspace { flex: 1; min-height: 0; display: flex; }
.canvas { flex: 1; min-width: 0; display: flex; flex-direction: column; align-items: center; overflow: hidden; }
.ruler-row { position: relative; flex: none; width: 100%; height: 43px; padding-top: 4px; display: flex; justify-content: center; }
.tab-type { position: absolute; left: 8px; top: 9px; }
.ruler { width: 816px; overflow: visible; }
.numbers { font: 11px "Noto Sans", sans-serif; fill: #999; text-anchor: middle; }
.page {
  position: relative;
  flex: 1;
  width: 816px;
  padding: 77px 76px 0 77px;
  background: #fff;
  color: #000;
  box-shadow: 0 0 0 1px #222, 0 0 0 2px #888;
}
.page::before, .page::after {
  content: "";
  position: absolute;
  top: 62px;
  width: 14px;
  height: 14px;
  border: 1px solid #ccc;
  border-top: 0;
}
.page::before { left: 63px; border-left: 0; }
.page::after { right: 62px; border-right: 0; }
.page p { margin: 0; font: 27px/32px "DejaVu Sans Mono", monospace; }
.scroll { flex: none; width: 13px; padding: 5px 3px 0 4px; }
.thumb { height: 50%; width: 6px; border-radius: 3px; background: #a3a3a3; }
.sidebar {
  position: relative;
  flex: none;
  width: 59px;
  border-left: 1px solid #777;
  display: flex;
  flex-direction: column;
  align-items: center;
  padding: 2px 0 0 2px;
}
.sidebar > button { width: 36px; height: 34px; margin-bottom: 8px; display: grid; place-items: center; border-radius: 6px; }
.sidebar > button:nth-child(2) { margin-bottom: 11px; }
.sidebar svg { width: 24px; height: 24px; }
.sidebar > .handle { position: absolute; left: -1px; top: 253px; width: 7px; height: 73px; background: #8e8e8e; border-radius: 0; place-items: center start; }
.sidebar .handle svg { width: 5px; height: 8px; }

.statusbar {
  flex: none;
  height: 21px;
  display: flex;
  align-items: center;
  padding-top: 1px;
  border-top: 1px solid #777;
  font-size: 12px;
  line-height: 20px;
}
.st { height: 20px; padding-left: 9px; border-right: 1px solid #282828; white-space: nowrap; display: flex; align-items: center; }
.save { width: 30px; padding-left: 12px; }
.pages { width: 152px; }
.words { width: 236px; }
.pstyle { width: 201px; }
.language { width: 170px; justify-content: center; padding: 0; }
.spacer { flex: 1; }
.mode { width: 28px; padding-left: 5px; }
.blank { width: 30px; }
.object { width: 108px; }
.views { width: 82px; padding-left: 11px; gap: 6px; }
.zoom { width: 138px; padding-left: 4px; }
.zoom input { appearance: none; width: 97px; height: 12px; margin: 0 5px; background: linear-gradient(#999, #999) center / 100% 1px no-repeat, linear-gradient(#999, #999) 17px center / 1px 6px no-repeat; }
.zoom input::-webkit-slider-thumb { appearance: none; width: 7px; height: 7px; border-radius: 50%; background: #fff; }
.percent { width: 47px; padding-left: 6px; }
```
